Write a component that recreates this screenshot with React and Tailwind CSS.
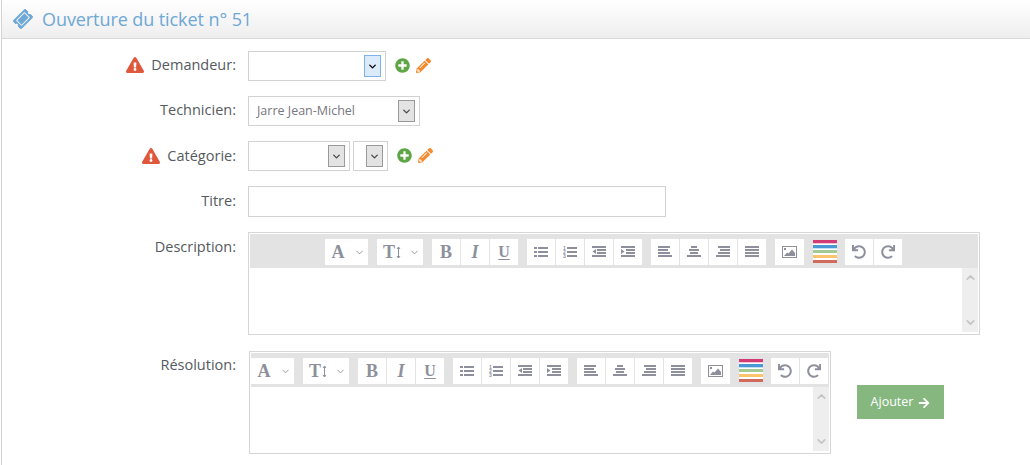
import React from "react";
import {
  FaTicketAlt,
  FaExclamationTriangle,
  FaPlusCircle,
  FaPencilAlt,
  FaArrowRight,
  FaUndo,
  FaRedo,
} from "react-icons/fa";
import { LuChevronDown, LuChevronUp } from "react-icons/lu";

const serif = "font-['Liberation_Serif',serif]";

function SelectBox({ width, children, focused }) {
  return (
    <div className={`h-[30px] ${width} border border-[#d2d2d2] bg-white flex items-center justify-between pl-2 pr-1 shrink-0`}>
      <span className="text-[12.5px] text-[#77777f]">{children}</span>
      <span
        className={
          focused
            ? "w-[17px] h-[22px] border border-[#7eb4ea] bg-[#dcebfc] flex items-center justify-center text-black"
            : "w-[17px] h-[22px] border border-[#9a9a9a] bg-[#e3e3e3] flex items-center justify-center text-[#4a4a4a]"
        }
      >
        <LuChevronDown size={11} strokeWidth={3} />
      </span>
    </div>
  );
}

function Label({ warn, children, className = "items-center pb-[2px]" }) {
  return (
    <div className={`w-[235px] pr-px shrink-0 flex justify-end gap-[7px] text-[14.5px] text-[#555a60] ${className}`}>
      {warn && <FaExclamationTriangle size={18} className="text-[#e0583c]" />}
      <span>{children}</span>
    </div>
  );
}

function Actions() {
  return (
    <div className="flex items-center gap-[6px] -ml-[2px] pb-px">
      <FaPlusCircle size={15} className="text-[#5ea545]" />
      <FaPencilAlt size={15} className="text-[#f58a2e]" />
    </div>
  );
}

function Btn({ children, className = "w-7" }) {
  return <div className={`h-[26px] bg-white flex items-center justify-center text-[#8d909c] ${className}`}>{children}</div>;
}

function Group({ children }) {
  return <div className="flex gap-px">{children}</div>;
}

// toolbar glyphs made of 2px bars: [x, y, width]
function Bars({ rows, children }) {
  return (
    <svg width="14" height="12" viewBox="0 0 14 12" fill="#8d909c">
      {rows.map(([x, y, w], i) => (
        <rect key={i} x={x} y={y} width={w} height="2" />
      ))}
      {children}
    </svg>
  );
}

const alignLeft = [[0, 0, 12], [0, 3, 10], [0, 6, 12], [0, 9, 14]];
const alignCenter = [[4, 0, 6], [2, 3, 10], [3, 6, 8], [0, 9, 14]];
const alignRight = [[2, 0, 12], [4, 3, 10], [2, 6, 12], [0, 9, 14]];
const alignFull = [[0, 0, 14], [0, 3, 14], [0, 6, 14], [0, 9, 14]];
const listBullets = [[0, 1, 3], [4, 1, 10], [0, 5, 3], [4, 5, 10], [0, 9, 3], [4, 9, 10]];
const listNumbers = [[4, 1, 10], [4, 5, 10], [4, 9, 10]];
const outdent = [[0, 0, 14], [5, 3, 9], [5, 6, 9], [0, 9, 14]];
const indent = [[0, 0, 14], [5, 3, 9], [5, 6, 9], [0, 9, 14]];

function ImageIcon() {
  return (
    <svg width="15" height="12" viewBox="0 0 15 12" fill="#8d909c">
      <rect x="0.5" y="0.5" width="14" height="11" fill="none" stroke="#8d909c" />
      <rect x="2" y="2" width="2" height="2" />
      <path d="M2 10 L5 6.5 L6.5 7.5 L10 3.5 L13 7 L13 10 Z" />
    </svg>
  );
}

function Rainbow() {
  return (
    <div className="w-6 h-[23px] flex flex-col mt-px">
      <div className="h-[3px] bg-[#d23b73]" />
      <div className="h-px bg-[#f3c6d6]" />
      <div className="h-px bg-white" />
      <div className="h-[3px] bg-[#4b97d3]" />
      <div className="h-px bg-[#c4e0f3]" />
      <div className="h-px bg-white" />
      <div className="h-[3px] bg-[#a3ca93]" />
      <div className="h-[2px] bg-white" />
      <div className="h-[3px] bg-[#fcc46c]" />
      <div className="h-[2px] bg-white" />
      <div className="h-[3px] bg-[#cf6a5c]" />
    </div>
  );
}

function Toolbar() {
  return (
    <div className="h-[34px] bg-[#e3e3e3] flex justify-center gap-[9px] pt-[5px] pr-px shrink-0">
      <Btn className={`w-[43px] relative pr-[17px] ${serif} font-bold text-[18px]`}>
        A
        <LuChevronDown size={11} className="absolute right-[3px] top-[8px]" />
      </Btn>
      <Btn className={`w-[46px] relative justify-start pl-[6px] gap-px ${serif} font-bold text-[18px]`}>
        T
        <svg width="5" height="13" viewBox="0 0 5 13" fill="none" stroke="#8d909c">
          <path d="M2.5 1 V12 M1 3 L2.5 1 L4 3 M1 10 L2.5 12 L4 10" />
        </svg>
        <LuChevronDown size={11} className="absolute right-[3px] top-[8px]" />
      </Btn>
      <Group>
        <Btn className={`w-7 ${serif} font-bold text-[18px]`}>B</Btn>
        <Btn className={`w-7 ${serif} italic font-bold text-[18px]`}>I</Btn>
        <Btn className={`w-7 ${serif} font-bold underline underline-offset-2 text-[16px]`}>U</Btn>
      </Group>
      <Group>
        <Btn><Bars rows={listBullets} /></Btn>
        <Btn>
          <Bars rows={listNumbers}>
            <text x="0" y="4" fontSize="5" fontFamily="Liberation Sans, sans-serif" fontWeight="700">1</text>
            <text x="0" y="8" fontSize="5" fontFamily="Liberation Sans, sans-serif" fontWeight="700">2</text>
            <text x="0" y="12" fontSize="5" fontFamily="Liberation Sans, sans-serif" fontWeight="700">3</text>
          </Bars>
        </Btn>
        <Btn><Bars rows={outdent}><path d="M4 3 V8 L0.5 5.5 Z" /></Bars></Btn>
        <Btn><Bars rows={indent}><path d="M0 3 V8 L3.5 5.5 Z" /></Bars></Btn>
      </Group>
      <Group>
        <Btn><Bars rows={alignLeft} /></Btn>
        <Btn><Bars rows={alignCenter} /></Btn>
        <Btn><Bars rows={alignRight} /></Btn>
        <Btn><Bars rows={alignFull} /></Btn>
      </Group>
      <Btn className="w-[29px]"><ImageIcon /></Btn>
      <Rainbow />
      <div className="flex gap-px -ml-[1px]">
        <Btn><FaUndo size={14} /></Btn>
        <Btn><FaRedo size={14} /></Btn>
      </div>
    </div>
  );
}

function Editor({ width }) {
  return (
    <div className={`${width} h-[103px] border border-[#d6d6d6] p-px flex flex-col shrink-0`}>
      <Toolbar />
      <div className="flex-1 flex justify-end">
        <div className="w-4 bg-[#eeeeee] flex flex-col items-center justify-between py-[3px] text-[#c4c4c4] mb-px">
          <LuChevronUp size={13} strokeWidth={3} />
          <LuChevronDown size={13} strokeWidth={3} />
        </div>
      </div>
    </div>
  );
}

export default function App() {
  return (
    <div className="h-[465px] w-[1030px] overflow-hidden bg-white ml-px border-l border-[#d4d4d4] font-['Open_Sans',sans-serif]">
      <header className="h-[39px] bg-gradient-to-b from-white to-[#eeeeee] border-b border-[#d8d8d8] flex items-center pl-[12px] gap-[10px] text-[#6ea8d6]">
        <FaTicketAlt size={18} className="-rotate-45" />
        <h1 className="text-[18px] font-normal tracking-[-0.08px]">Ouverture du ticket n° 51</h1>
      </header>

      <div className="flex flex-col pt-3">
        <div className="flex items-center h-[30px] gap-[11px]">
          <Label warn>Demandeur:</Label>
          <SelectBox width="w-[138px]" focused />
          <Actions />
        </div>

        <div className="flex items-center h-[30px] gap-[11px] mt-[15px]">
          <Label>Technicien:</Label>
          <SelectBox width="w-[172px]">Jarre Jean-Michel</SelectBox>
        </div>

        <div className="flex items-center h-[30px] gap-[11px] mt-[15px]">
          <Label warn className="items-center">Catégorie:</Label>
          <div className="flex gap-[3px]">
            <SelectBox width="w-[102px]" />
            <SelectBox width="w-[35px]" />
          </div>
          <Actions />
        </div>

        <div className="flex items-center h-[31px] gap-[11px] mt-[15px]">
          <Label>Titre:</Label>
          <div className="w-[418px] h-[31px] border border-[#d2d2d2]" />
        </div>

        <div className="flex gap-[11px] mt-[15px]">
          <Label className="items-start pt-[4px]">Description:</Label>
          <Editor width="w-[732px]" />
        </div>

        <div className="flex gap-[12px] mt-[16px]">
          <Label className="items-start pt-[3px]">Résolution:</Label>
          <Editor width="w-[582px]" />
          <button className="w-[87px] h-[34px] mt-[34px] ml-[14px] pt-px bg-[#86b77f] text-white text-[12.5px] flex items-center justify-center gap-[5px]">
            Ajouter <FaArrowRight size={12} />
          </button>
        </div>
      </div>
    </div>
  );
}
